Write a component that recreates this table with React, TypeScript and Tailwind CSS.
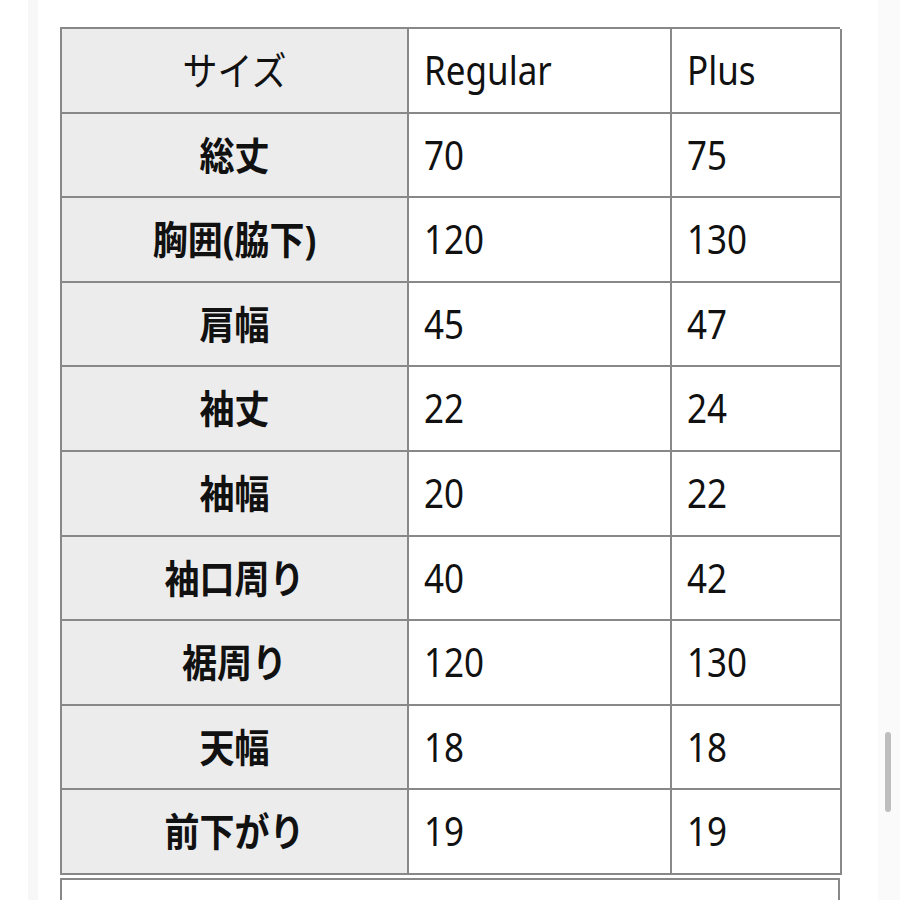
const rows: [string, string, string][] = [
  ["総丈", "70", "75"],
  ["胸囲(脇下)", "120", "130"],
  ["肩幅", "45", "47"],
  ["袖丈", "22", "24"],
  ["袖幅", "20", "22"],
  ["袖口周り", "40", "42"],
  ["裾周り", "120", "130"],
  ["天幅", "18", "18"],
  ["前下がり", "19", "19"],
];

const font = { fontFamily: '"Noto Sans", "Noto Sans CJK JP", sans-serif' };

export default function App() {
  return (
    <div
      className="relative h-[900px] w-[900px] overflow-hidden bg-white text-[#111]"
      style={font}
    >
      {/* faint side shading */}
      <div className="flex h-full">
        <div className="w-[28px] bg-white" />
        <div className="w-[10px] bg-[#f7f7f7]" />
        <div className="flex-1 pl-[22px] pt-[27px]">
          <div className="grid w-[780px] grid-cols-[347px_263px_170px] auto-rows-[84.6px] border-l-2 border-t-2 border-[#888]">
            <div className="flex items-center justify-center border-b-2 border-r-2 border-[#888] bg-[#ececec] text-[35px]">
              <span className="inline-block scale-y-[1.12]">サイズ</span>
            </div>
            <div className="flex items-center border-b-2 border-r-2 border-[#888] pl-[15px] text-[35px]">
              <span className="inline-block scale-y-[1.12]">Regular</span>
            </div>
            <div className="flex items-center border-b-2 border-r-2 border-[#888] pl-[15px] text-[35px]">
              <span className="inline-block scale-y-[1.12]">Plus</span>
            </div>
            {rows.map(([label, reg, plus]) => (
              <div key={label} className="contents">
                <div className="flex items-center justify-center border-b-2 border-r-2 border-[#888] bg-[#ececec] text-[35px] font-bold">
                  <span className="inline-block scale-y-[1.12]">{label}</span>
                </div>
                <div className="flex items-center border-b-2 border-r-2 border-[#888] pl-[15px] text-[35px]">
                  <span className="inline-block scale-y-[1.12]">{reg}</span>
                </div>
                <div className="flex items-center border-b-2 border-r-2 border-[#888] pl-[15px] text-[35px]">
                  <span className="inline-block scale-y-[1.12]">{plus}</span>
                </div>
              </div>
            ))}
          </div>
          <div className="mt-[3px] h-[40px] w-[780px] border-l-2 border-r-2 border-t-2 border-[#888]" />
        </div>
        <div className="w-[22px] bg-[#fafafa]" />
      </div>
      {/* scrollbar */}
      <div className="absolute left-[885px] top-[732px] h-[80px] w-[6px] rounded-full bg-[#bdbdbd]" />
    </div>
  );
}
